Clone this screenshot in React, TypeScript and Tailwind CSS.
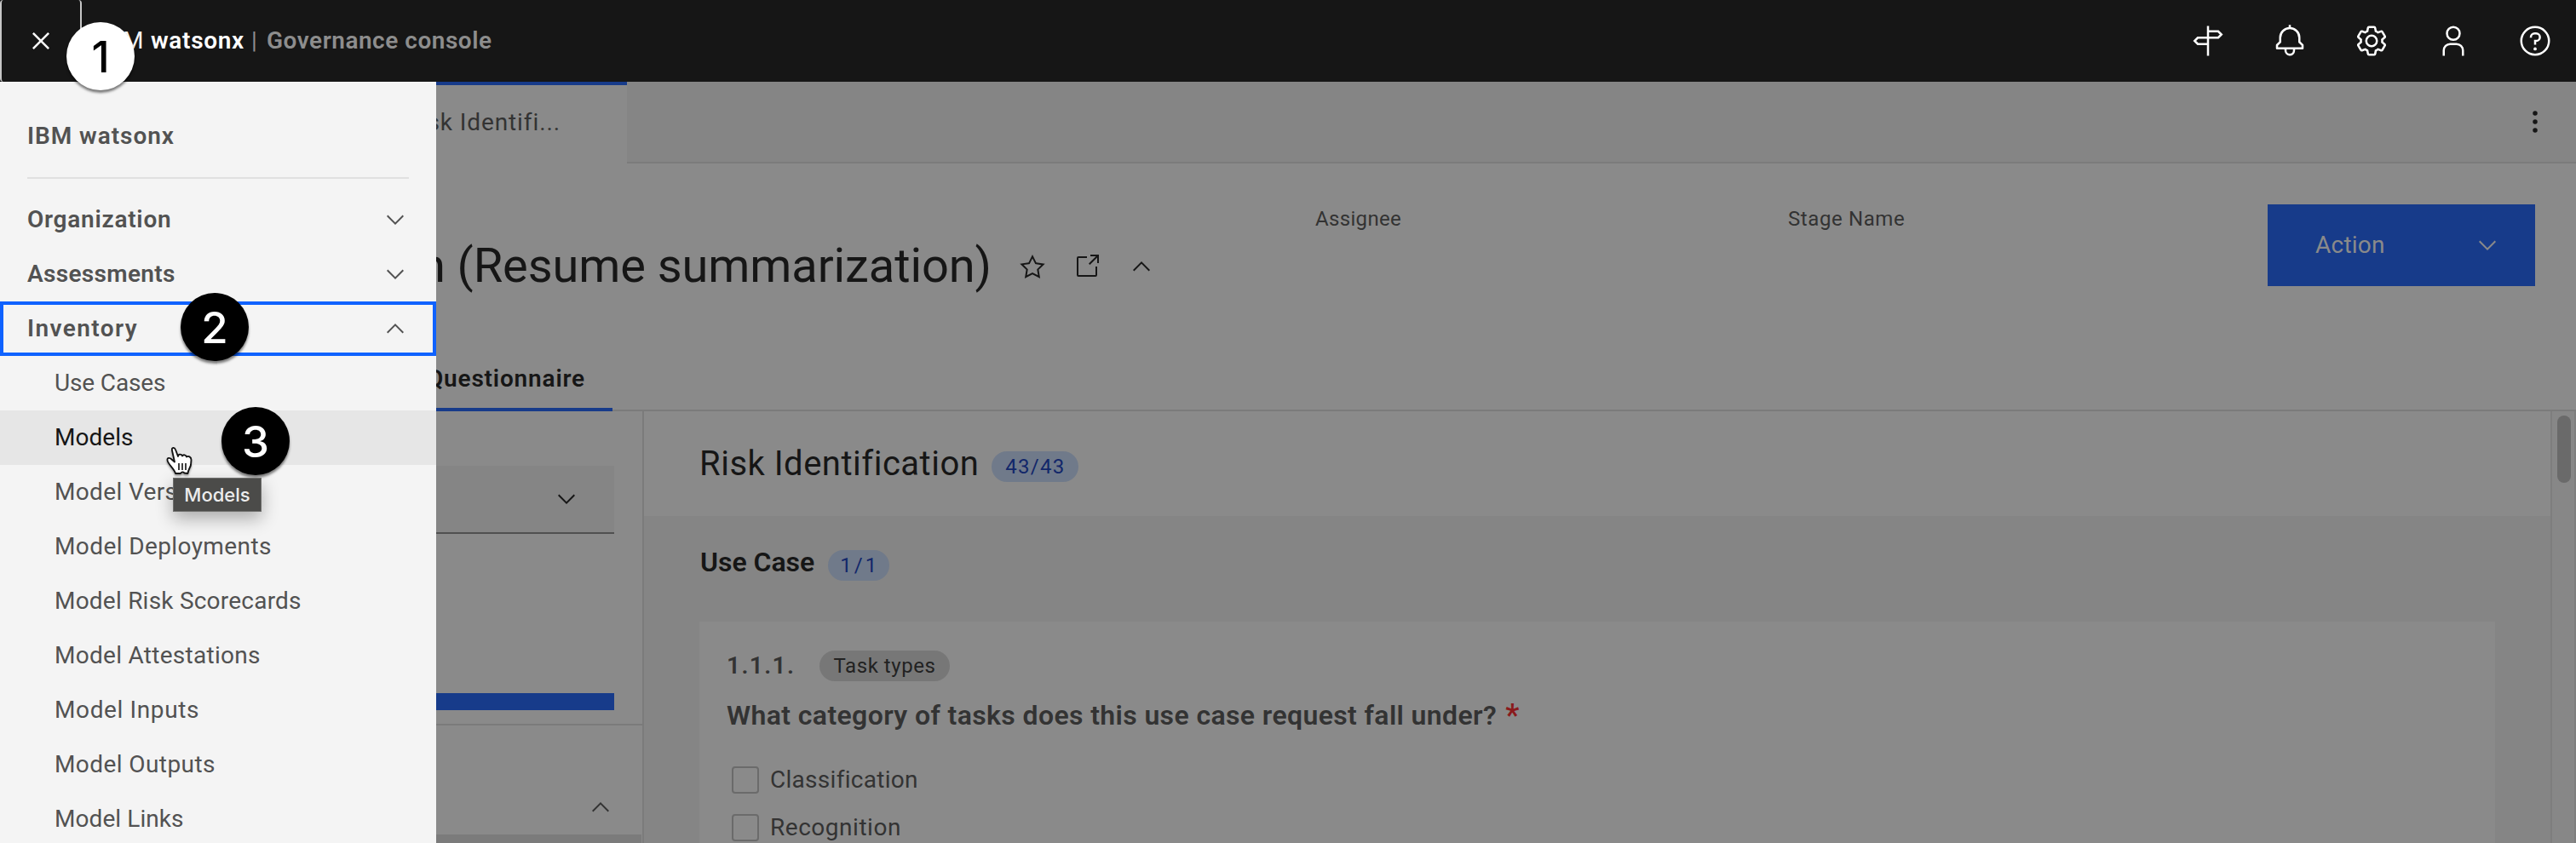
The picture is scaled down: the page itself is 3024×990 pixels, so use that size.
import React from "react";

type IconProps = { className?: string };

const ChevronDown = ({ className = "" }: IconProps) => (
  <svg viewBox="0 0 16 16" fill="currentColor" className={`h-8 w-8 shrink-0 ${className}`}>
    <path d="M8 11L3 6 3.7 5.3 8 9.6 12.3 5.3 13 6z" />
  </svg>
);

const ChevronUp = ({ className = "" }: IconProps) => (
  <svg viewBox="0 0 16 16" fill="currentColor" className={`h-8 w-8 shrink-0 ${className}`}>
    <path d="M8 5L13 10 12.3 10.7 8 6.4 3.7 10.7 3 10z" />
  </svg>
);

const HeaderIcon = ({ children }: { children: React.ReactNode }) => (
  <button className="flex h-24 w-24 items-center justify-center">
    <svg viewBox="0 0 32 32" fill="currentColor" className="h-10 w-10">
      {children}
    </svg>
  </button>
);

function Header() {
  return (
    <header className="flex h-24 items-center bg-[#161616] text-white">
      <div className="flex h-24 w-24 items-center justify-center rounded-sm border-x-2 border-[#c6c6c6]">
        <svg viewBox="0 0 32 32" fill="currentColor" className="h-10 w-10">
          <path d="M17.4141 16 24 9.4141 22.5859 8 16 14.5859 9.4143 8 8 9.4141 14.5859 16 8 22.5859 9.4143 24 16 17.4141 22.5859 24 24 22.5859 17.4141 16z" />
        </svg>
      </div>
      <div className="flex items-center whitespace-pre pl-[25px] text-[28px]">
        <span className="w-[56px] tracking-[-1px] text-[#f4f4f4]">IBM</span>
        <span className="w-[118px] font-semibold tracking-[0.67px]">watsonx</span>
        <span className="w-[18px] text-[#8d8d8d]">|</span>
        <span className="font-semibold tracking-[0.51px] text-[#8d8d8d]">Governance console</span>
      </div>
      <div className="ml-auto flex">
        <HeaderIcon>
          <path
            d="M16 2V30M16 7H25.6L28.6 10 25.6 13H6.4L3.4 16 6.4 19H16"
            fill="none"
            stroke="currentColor"
            strokeWidth="2"
          />
        </HeaderIcon>
        <HeaderIcon>
          <path d="M28.7071,19.293L26,16.5859V13a10.0136,10.0136,0,0,0-9-9.9492V1H15V3.0508A10.0136,10.0136,0,0,0,6,13v3.5859L3.2929,19.293A1,1,0,0,0,3,20v3a1,1,0,0,0,1,1h7v.7768a5.152,5.152,0,0,0,4.5,5.1987A5.0057,5.0057,0,0,0,21,25V24h7a1,1,0,0,0,1-1V20A1,1,0,0,0,28.7071,19.293ZM19,25a3,3,0,0,1-6,0V24h6Zm8-3H5V20.4141L7.707,17.707A1,1,0,0,0,8,17V13a8,8,0,0,1,16,0v4a1,1,0,0,0,.293.707L27,20.4141Z" />
        </HeaderIcon>
        <HeaderIcon>
          <path d="M27,16.76c0-.25,0-.5,0-.76s0-.51,0-.77l1.92-1.68A2,2,0,0,0,29.3,11L26.94,7a2,2,0,0,0-1.73-1,2,2,0,0,0-.64.1l-2.43.82a11.35,11.35,0,0,0-1.31-.75l-.51-2.52a2,2,0,0,0-2-1.61H13.64a2,2,0,0,0-2,1.61l-.51,2.52a11.48,11.48,0,0,0-1.32.75L7.43,6.06A2,2,0,0,0,6.79,6,2,2,0,0,0,5.06,7L2.7,11a2,2,0,0,0,.41,2.51L5,15.24c0,.25,0,.5,0,.76s0,.51,0,.77L3.11,18.45A2,2,0,0,0,2.7,21L5.06,25a2,2,0,0,0,1.73,1,2,2,0,0,0,.64-.1l2.43-.82a11.35,11.35,0,0,0,1.31.75l.51,2.52a2,2,0,0,0,2,1.61h4.72a2,2,0,0,0,2-1.61l.51-2.52a11.48,11.48,0,0,0,1.32-.75l2.42.82a2,2,0,0,0,.64.1,2,2,0,0,0,1.73-1L29.3,21a2,2,0,0,0-.41-2.51ZM25.21,24l-3.43-1.16a8.86,8.86,0,0,1-2.71,1.57L18.36,28H13.64l-.71-3.55a9.36,9.36,0,0,1-2.7-1.57L6.79,24,4.43,20l2.72-2.4a8.9,8.9,0,0,1,0-3.13L4.43,12,6.79,8l3.43,1.16a8.86,8.86,0,0,1,2.71-1.57L13.64,4h4.72l.71,3.55a9.36,9.36,0,0,1,2.7,1.57L25.21,8,27.57,12l-2.72,2.4a8.9,8.9,0,0,1,0,3.13L27.57,20Z" />
          <path d="M16,22a6,6,0,1,1,6-6A5.94,5.94,0,0,1,16,22Zm0-10a3.91,3.91,0,0,0-4,4,3.91,3.91,0,0,0,4,4,3.91,3.91,0,0,0,4-4A3.91,3.91,0,0,0,16,12Z" />
        </HeaderIcon>
        <HeaderIcon>
          <path d="M16,4a5,5,0,1,1-5,5,5,5,0,0,1,5-5m0-2a7,7,0,1,0,7,7A7,7,0,0,0,16,2Z" />
          <path d="M26,30H24V25a5,5,0,0,0-5-5H13a5,5,0,0,0-5,5v5H6V25a7,7,0,0,1,7-7h6a7,7,0,0,1,7,7Z" />
        </HeaderIcon>
        <HeaderIcon>
          <path d="M16,2A14,14,0,1,0,30,16,14,14,0,0,0,16,2Zm0,26A12,12,0,1,1,28,16,12,12,0,0,1,16,28Z" />
          <circle cx="16" cy="23.5" r="1.5" />
          <path d="M17,8H15.5A4.49,4.49,0,0,0,11,12.5V13h2v-.5A2.5,2.5,0,0,1,15.5,10H17a2.5,2.5,0,0,1,0,5H15v4.5h2V17a4.5,4.5,0,0,0,0-9Z" />
        </HeaderIcon>
      </div>
    </header>
  );
}

const groups = [
  { name: "Organization", tracking: "tracking-[0.75px]", open: false },
  { name: "Assessments", tracking: "tracking-[0.32px]", open: false },
  { name: "Inventory", tracking: "tracking-[1.4px]", open: true },
];

const items = [
  { name: "Use Cases", tracking: "tracking-[-0.14px]" },
  { name: "Models", tracking: "tracking-[0.03px]" },
  { name: "Model Versions", tracking: "tracking-[0.35px]" },
  { name: "Model Deployments", tracking: "tracking-[0.4px]" },
  { name: "Model Risk Scorecards", tracking: "tracking-[0.22px]" },
  { name: "Model Attestations", tracking: "tracking-[0.28px]" },
  { name: "Model Inputs", tracking: "tracking-[0.62px]" },
  { name: "Model Outputs", tracking: "tracking-[0.42px]" },
  { name: "Model Links", tracking: "tracking-[0.07px]" },
];

function SideNav() {
  return (
    <nav className="absolute left-0 top-24 h-[894px] w-[512px] overflow-hidden bg-[#f4f4f4] text-[28px] text-[#525252]">
      <div className="mx-8 flex h-[114px] items-center border-b-2 border-[#e0e0e0] pt-4 font-semibold tracking-[0.95px]">
        IBM watsonx
      </div>
      <div className="pt-4">
        {groups.map((g) => (
          <div
            key={g.name}
            className={`flex h-16 items-center justify-between border-4 px-7 font-semibold ${
              g.open ? "border-[#0f62fe]" : "border-transparent"
            }`}
          >
            <span className={g.tracking}>{g.name}</span>
            {g.open ? <ChevronUp /> : <ChevronDown />}
          </div>
        ))}
        {items.map((it) => (
          <div
            key={it.name}
            className={`flex h-16 items-center pl-16 ${
              it.name === "Models" ? "bg-[#e6e6e6] text-[#161616]" : ""
            }`}
          >
            <span className={it.tracking}>{it.name}</span>
          </div>
        ))}
      </div>
    </nav>
  );
}

function TabBar() {
  return (
    <div className="flex h-24 bg-[#858585]">
      <div className="flex w-[736px] items-center justify-end border-t-4 border-[#173b8a] bg-[#8a8a8a] pb-1 pr-[78px] text-[28px] tracking-[0.9px] text-[#333]">
        Risk Identifi...
      </div>
      <div className="flex flex-1 items-center justify-end border-b-2 border-[#7b7b7b] pr-7">
        <svg viewBox="0 0 32 32" fill="#161616" className="h-10 w-10">
          <circle cx="16" cy="8" r="2.2" />
          <circle cx="16" cy="16" r="2.2" />
          <circle cx="16" cy="24" r="2.2" />
        </svg>
      </div>
    </div>
  );
}

function PageHeading() {
  return (
    <div className="grid h-[215px] grid-cols-[1544px_555px_563px_314px] items-start text-[#333]">
      <div className="mt-20 flex h-[81px] w-[1356px] items-center justify-end gap-8 text-[#161616]">
        <h1 className="whitespace-nowrap text-[56px] leading-[81px] tracking-[-0.09px]">
          Risk Identification (Resume summarization)
        </h1>
        <svg viewBox="0 0 32 32" fill="currentColor" className="h-8 w-8 shrink-0">
          <path d="M16,6.52l2.76,5.58.46,1,1,.15,6.16.89L22,18.44l-.75.73.18,1,1.05,6.13-5.51-2.89L16,23l-.93.49L9.56,26.34l1-6.13.18-1L10,18.44,5.58,14.09l6.16-.89,1-.15.46-1L16,6.52M16,2l-4.55,9.22L1.28,12.69l7.36,7.18L6.9,30,16,25.22,25.1,30,23.36,19.87l7.36-7.17L20.55,11.22Z" />
        </svg>
        <svg viewBox="0 0 32 32" fill="currentColor" className="h-8 w-8 shrink-0">
          <path d="M26,28H6a2.0027,2.0027,0,0,1-2-2V6A2.0027,2.0027,0,0,1,6,4H16V6H6V26H26V16h2V26A2.0027,2.0027,0,0,1,26,28Z" />
          <path d="M20 2 20 4 26.586 4 18 12.586 19.414 14 28 5.414 28 12 30 12 30 2 20 2z" />
        </svg>
        <ChevronUp />
      </div>
      <div className="mt-[49px] text-2xl leading-8 tracking-[0.33px]">Assignee</div>
      <div className="mt-[49px] text-2xl leading-8 tracking-[0.61px]">Stage Name</div>
      <button className="mt-12 flex h-24 items-center justify-between bg-[#173b8a] pl-14 pr-10 text-[28px] tracking-[0.23px] text-[#8a8a8a]">
        Action
        <ChevronDown />
      </button>
    </div>
  );
}

function SectionTabs() {
  return (
    <div className="flex h-[76px] border-b-2 border-[#7b7b7b]">
      <div className="h-[76px] w-[719px] shrink-0 border-b-4 border-[#173b8a] pr-8 pt-[4px] text-right text-[28px] font-semibold leading-[67px] tracking-[0.82px] text-[#161616]">
        Questionnaire
      </div>
    </div>
  );
}

function LeftPanel() {
  return (
    <div className="flex w-[756px] flex-col border-r-2 border-[#7b7b7b] pt-16 text-[#161616]">
      <div className="flex h-20 w-[721px] items-center justify-end border-b-2 border-[#505050] bg-[#858585] pr-10">
        <ChevronDown />
      </div>
      <div className="mt-[187px] h-5 w-[721px] bg-[#173b8a]" />
      <div className="mt-4 flex h-[130px] items-center justify-end border-t-2 border-[#7b7b7b] pr-[33px] pt-16 text-[#333]">
        <ChevronUp />
      </div>
      <div className="mr-px flex-1 bg-[#7b7b7b]" />
    </div>
  );
}

const options = [
  { label: "Classification", tracking: "tracking-[0.28px]" },
  { label: "Recognition", tracking: "tracking-[0.53px]" },
];

function Questions() {
  return (
    <div className="flex flex-1 flex-col bg-[#858585]">
      <div className="flex h-[123px] items-center bg-[#8a8a8a] pl-[65px]">
        <h2 className="text-[40px] tracking-[0.5px] text-[#161616]">Risk Identification</h2>
        <span className="ml-[15px] mt-[7px] flex h-9 w-[102px] items-center justify-center rounded-full bg-[#707a8a] text-2xl tracking-[1.3px] text-[#12276a]">
          43/43
        </span>
      </div>
      <div className="flex h-[124px] items-start pl-[66px] pt-8">
        <h3 className="text-[32px] font-semibold leading-[44px] tracking-[-0.03px] text-[#161616]">Use Case</h3>
        <span className="ml-4 mt-2 flex h-9 w-[72px] items-center justify-center rounded-full bg-[#707a8a] pl-0.5 text-2xl tracking-[3px] text-[#12276a]">
          1/1
        </span>
      </div>
      <div className="ml-[65px] mr-[65px] flex-1 overflow-hidden bg-[#8a8a8a] pl-8 pt-[34px] text-[#333]">
        <div className="flex h-9 items-center">
          <span className="w-[109px] text-[28px] font-semibold tracking-[1.42px]">1.1.1.</span>
          <span className="flex h-9 w-[153px] items-center justify-center rounded-full bg-[#777] text-2xl tracking-[0.56px] text-[#222]">
            Task types
          </span>
        </div>
        <div className="mt-4 flex h-12 items-center whitespace-pre text-[32px] font-semibold tracking-[0.38px]">
          What category of tasks does this use case request fall under?
          <span className="ml-2.5 text-[36px] text-[#8a1a1c]">*</span>
        </div>
        <div className="mt-9 flex flex-col gap-6 pl-1.5">
          {options.map((o) => (
            <label key={o.label} className="flex h-8 items-center gap-[13px] text-[28px]">
              <span className="h-8 w-8 rounded-sm border-2 border-[#6b6b6b]" />
              <span className={o.tracking}>{o.label}</span>
            </label>
          ))}
        </div>
      </div>
    </div>
  );
}

const Badge = ({ n, className }: { n: number; className: string }) => (
  <div
    className={`absolute flex h-20 w-20 items-center justify-center rounded-full font-['Inter',sans-serif] text-[51px] font-medium leading-none shadow-[0_3px_3px_rgba(0,0,0,0.5)] ${className}`}
  >
    {n}
  </div>
);

export default function App() {
  return (
    <div className="relative h-[990px] w-[3024px] overflow-hidden bg-[#8a8a8a] font-['Roboto',sans-serif]">
      <Header />
      <TabBar />
      <PageHeading />
      <SectionTabs />
      <div className="flex h-[507px]">
        <LeftPanel />
        <Questions />
        <div className="flex w-[30px] justify-center border-x-2 border-[#7e7e7e] bg-[#878787] pt-[5px]">
          <div className="ml-0.5 h-[79px] w-4 rounded-full bg-[#6a6a6a]" />
        </div>
      </div>
      <SideNav />
      <Badge n={1} className="left-[78px] top-[26px] bg-white text-black" />
      <Badge n={2} className="left-[212px] top-[344px] bg-black text-white" />
      <Badge n={3} className="left-[260px] top-[478px] bg-black text-white" />
      <div className="absolute left-[203px] top-[561px] flex h-10 w-[104px] items-center justify-center border border-[#6e6e6c] bg-[#4b4b49] font-['Inter',sans-serif] text-[22px] font-medium leading-none text-[#ececec] shadow-[0_8px_20px_rgba(0,0,0,0.3)]">
        Models
      </div>
      <svg viewBox="0 0 34 36" className="absolute left-[194px] top-[523px] h-9 w-[34px] drop-shadow-[0_2px_1px_rgba(0,0,0,0.35)]">
        <path
          d="M8 6C7 2 11 2 12 5L15 13C15 10 19 10 20 12.5C21 10.5 24.5 11 25 13.5C27 12 30.5 13.5 30.5 17L30 23C29.5 26 27 28 26.5 33L22.5 32.5Q20 30 18 33L12 33C11 28 3 22 2.5 17.5C2 14 5.5 14.5 7.5 16.5L11 19.5Z"
          fill="#fff"
          stroke="#111"
          strokeWidth="1.8"
          strokeLinejoin="round"
        />
        <path d="M16 21V29M20 21V29M24 21V29" stroke="#111" strokeWidth="1.6" />
      </svg>
    </div>
  );
}
